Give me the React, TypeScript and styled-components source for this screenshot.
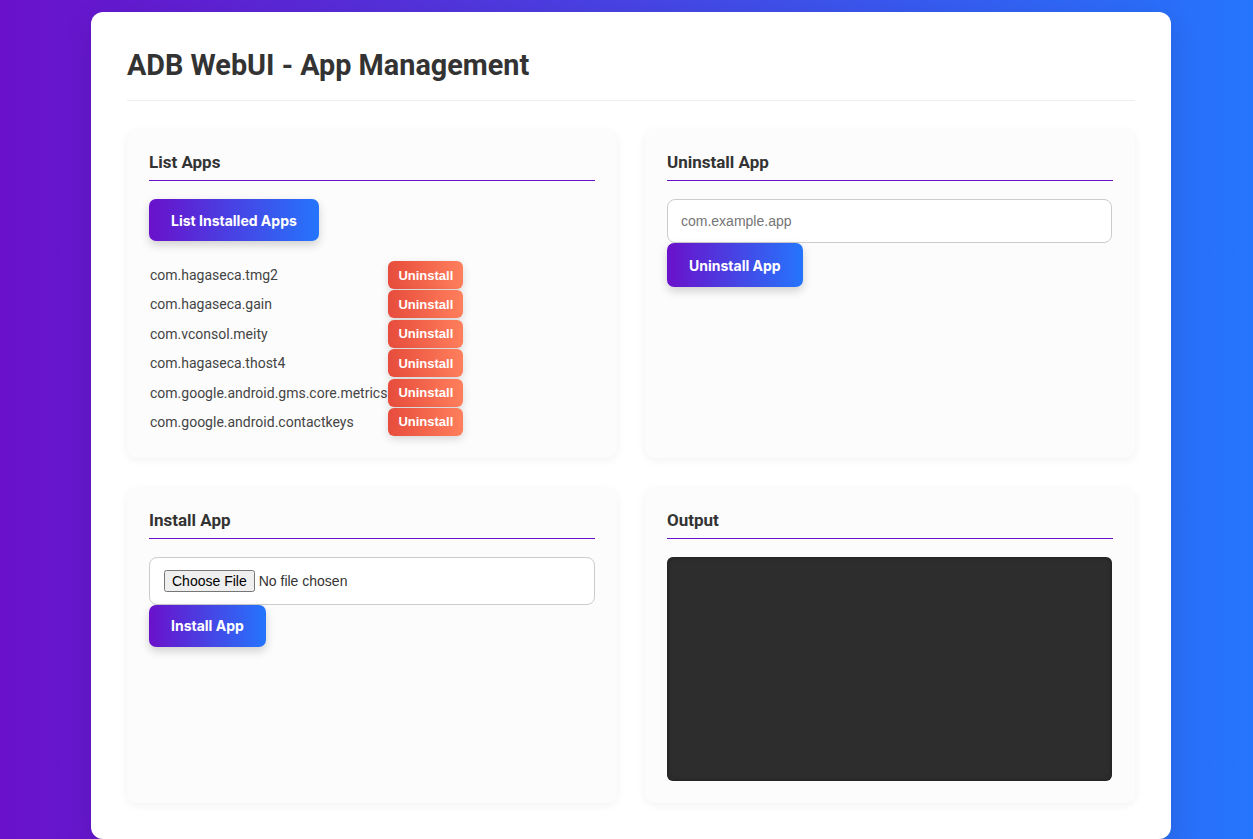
import React from "react";
import styled, { createGlobalStyle } from "styled-components";

const GlobalStyle = createGlobalStyle`
  html, body { margin: 0; padding: 0; }
  body {
    min-height: 100vh;
    background: linear-gradient(to right, #6a11cb 0%, #2575fc 100%);
    font-family: Roboto, "Noto Sans", Arial, sans-serif;
    color: #333;
  }
  * { box-sizing: border-box; }
`;

const Page = styled.div`
  padding: 12px 82px 20px 91px;
`;

const Container = styled.div`
  width: 1080px;
  background: #ffffff;
  border-radius: 12px;
  padding: 36px 36px 36px 36px;
  box-shadow: 0 10px 30px rgba(0, 0, 0, 0.12);
`;

const Title = styled.h1`
  margin: 0 0 29px 0;
  font-family: Roboto, sans-serif;
  font-weight: 700;
  font-size: 28.8px;
  line-height: 34px;
  color: #333;
  padding-bottom: 18px;
  border-bottom: 1px solid #eeeeee;
`;

const Grid = styled.div`
  display: grid;
  grid-template-columns: 1fr 1fr;
  gap: 30px 28px;
`;

const Card = styled.section`
  background: #fcfcfc;
  border-radius: 10px;
  padding: 22px;
  box-shadow: 0 2px 10px rgba(0, 0, 0, 0.06);
  display: flex;
  flex-direction: column;
  align-items: flex-start;
`;

const CardTitle = styled.h2`
  align-self: stretch;
  margin: 0 0 18px 0;
  font-family: Roboto, sans-serif;
  font-weight: 700;
  font-size: 17px;
  line-height: 20px;
  color: #333;
  padding-bottom: 8px;
  border-bottom: 1px solid #6a11cb;
`;

const PrimaryButton = styled.button<{ $h?: number }>`
  border: none;
  border-radius: 7px;
  background: linear-gradient(to right, #6a11cb 0%, #2575fc 100%);
  color: #fff;
  font-family: Inter, Roboto, sans-serif;
  font-weight: 700;
  font-size: 14px;
  height: ${(p) => p.$h ?? 42}px;
  padding: 0 22px;
  cursor: pointer;
  box-shadow: 0 4px 10px rgba(0, 0, 0, 0.18);
`;

const AppList = styled.div`
  margin-top: 20px;
  display: grid;
  grid-template-columns: max-content max-content;
  row-gap: 1.4px;
  align-items: center;
`;

const AppName = styled.span`
  font-family: Roboto, sans-serif;
  font-size: 14px;
  color: #444;
  padding-left: 1px;
  padding-right: 1px;
`;

const DangerButton = styled.button`
  border: none;
  border-radius: 6px;
  background: linear-gradient(to right, #e74c3c 0%, #ff7f5c 100%);
  color: #fff;
  font-family: "Liberation Sans", Arial, sans-serif;
  font-weight: 700;
  font-size: 13px;
  height: 28px;
  padding: 0 10px;
  cursor: pointer;
  box-shadow: 0 3px 8px rgba(0, 0, 0, 0.15);
`;

const TextInput = styled.input`
  align-self: stretch;
  height: 44px;
  margin-right: 1px;
  border: 1px solid #cccccc;
  border-radius: 8px;
  padding: 0 13px;
  font-family: "Liberation Sans", Arial, sans-serif;
  font-size: 14px;
  color: #333;
  background: #fff;
  outline: none;
  &::placeholder { color: #757575; }
`;

const FileBox = styled.div`
  align-self: stretch;
  height: 48px;
  border: 1px solid #cccccc;
  border-radius: 8px;
  padding: 0 14px;
  background: #fff;
  display: flex;
  align-items: center;
`;

const FileInput = styled.input`
  font-family: "Liberation Sans", Arial, sans-serif;
  font-size: 14px;
  color: #333;
`;

const OutputBox = styled.pre`
  align-self: stretch;
  margin: 0 1px 0 0;
  height: 224px;
  background: #2d2d2d;
  border-radius: 6px;
  box-shadow: inset 0 0 4px rgba(0, 0, 0, 0.4);
  color: #eee;
  font-family: "Liberation Mono", monospace;
  font-size: 13px;
`;

const apps = [
  "com.hagaseca.tmg2",
  "com.hagaseca.gain",
  "com.vconsol.meity",
  "com.hagaseca.thost4",
  "com.google.android.gms.core.metrics",
  "com.google.android.contactkeys",
];

export default function App() {
  return (
    <>
      <GlobalStyle />
      <Page>
        <Container>
          <Title>ADB WebUI - App Management</Title>
          <Grid>
            <Card>
              <CardTitle>List Apps</CardTitle>
              <PrimaryButton $h={42}>List Installed Apps</PrimaryButton>
              <AppList>
                {apps.map((a) => (
                  <React.Fragment key={a}>
                    <AppName>{a}</AppName>
                    <DangerButton>Uninstall</DangerButton>
                  </React.Fragment>
                ))}
              </AppList>
            </Card>
            <Card>
              <CardTitle>Uninstall App</CardTitle>
              <TextInput placeholder="com.example.app" />
              <PrimaryButton $h={44}>Uninstall App</PrimaryButton>
            </Card>
            <Card>
              <CardTitle>Install App</CardTitle>
              <FileBox>
                <FileInput type="file" />
              </FileBox>
              <PrimaryButton $h={42}>Install App</PrimaryButton>
            </Card>
            <Card>
              <CardTitle>Output</CardTitle>
              <OutputBox />
            </Card>
          </Grid>
        </Container>
      </Page>
    </>
  );
}
